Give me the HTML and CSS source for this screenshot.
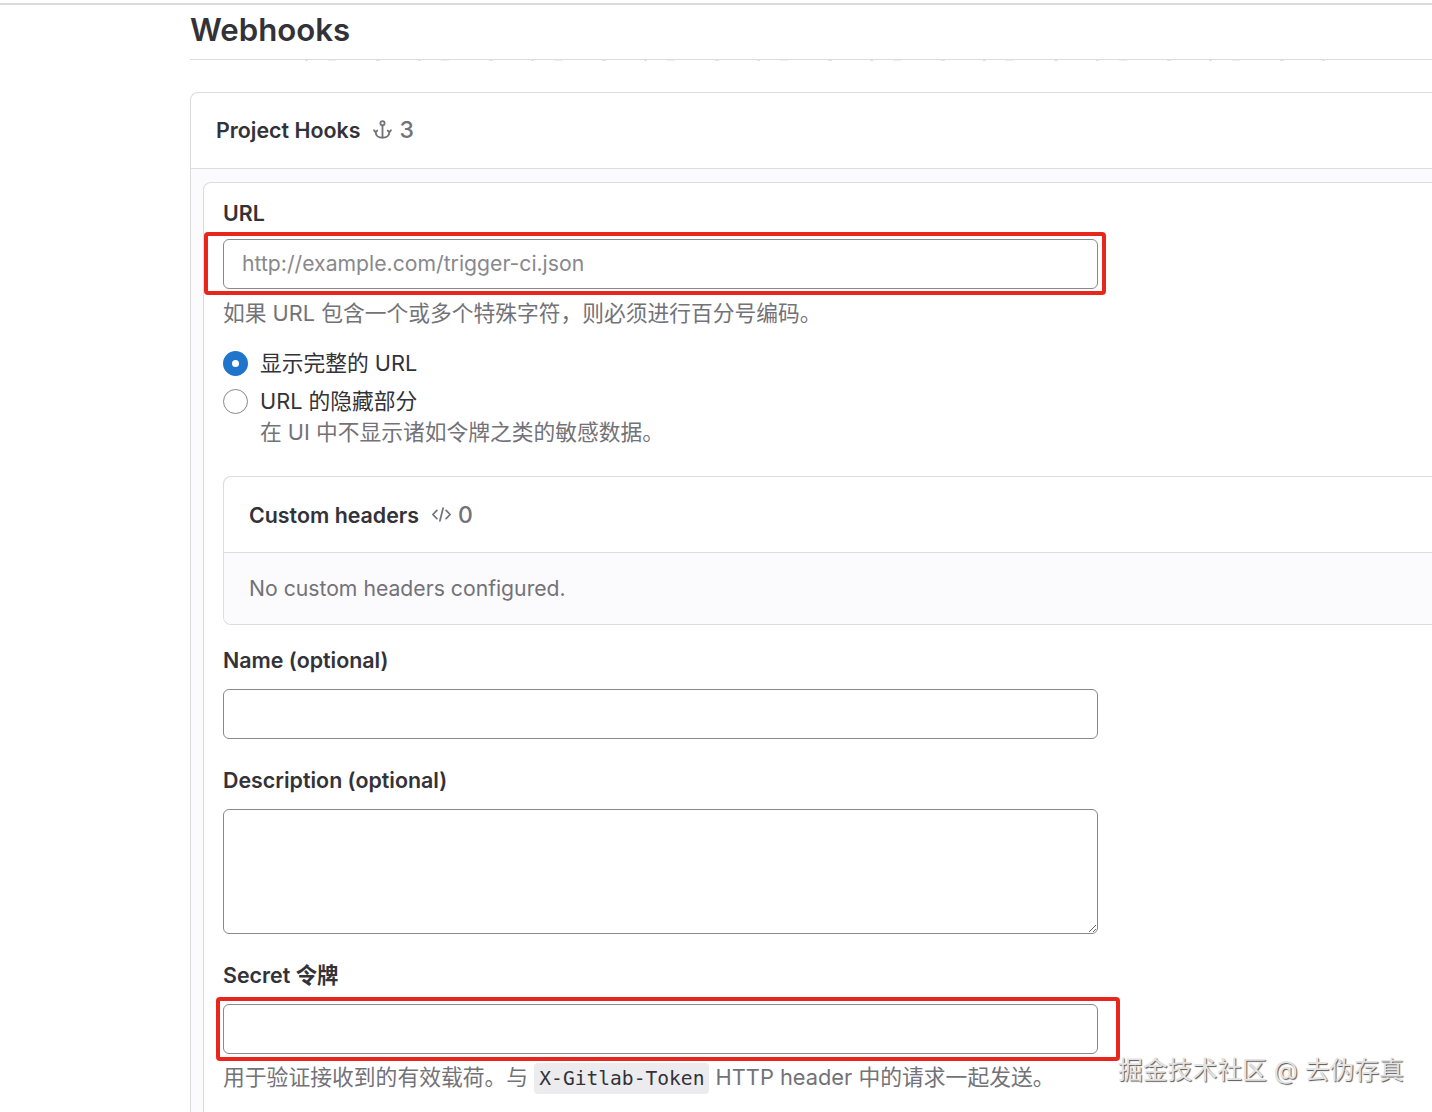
FILE: index.html
```html
<!DOCTYPE html>
<html lang="zh-CN">
<head>
    <meta charset="UTF-8">
    <meta name="viewport" content="width=device-width, initial-scale=1.0">
    <title>Webhooks</title>
    <link rel="stylesheet" href="styles.css">
</head>
<body>
    <div class="top-line"></div>
    <main class="content">
        <h1 class="page-title">Webhooks</h1>
        <div class="clipped-text"></div>

        <section class="card">
            <header class="card-header project-header">
                <strong>Project Hooks</strong>
                <span class="count">
                    <svg class="icon" viewBox="0 0 16 16" width="21" height="21" fill="none" stroke="currentColor" stroke-width="1.4" stroke-linecap="round" stroke-linejoin="round">
                        <circle cx="8" cy="3.2" r="1.6"/>
                        <path d="M8 4.8V14.2"/>
                        <path d="M1.6 8.6l1.2 1.4 1.2-1.2"/>
                        <path d="M14.4 8.6l-1.2 1.4-1.2-1.2"/>
                        <path d="M2.8 10c0 2.6 2.2 4.2 5.2 4.2s5.2-1.6 5.2-4.2"/>
                    </svg>
                    3
                </span>
            </header>
            <div class="card-body">
                <form class="hook-form">
                    <div class="field field-url">
                        <label class="field-label" for="hook-url">URL</label>
                        <div class="marked">
                            <input class="text-input" type="text" id="hook-url" placeholder="http://example.com/trigger-ci.json">
                            <div class="red-box red-box-url"></div>
                        </div>
                        <p class="help">如果 URL 包含一个或多个特殊字符，则必须进行百分号编码。</p>
                    </div>

                    <div class="radio-group">
                        <div class="radio-row">
                            <span class="radio radio-on"></span>
                            <span class="radio-text">显示完整的 URL</span>
                        </div>
                        <div class="radio-row">
                            <span class="radio"></span>
                            <span class="radio-text">URL 的隐藏部分</span>
                        </div>
                        <p class="help radio-help">在 UI 中不显示诸如令牌之类的敏感数据。</p>
                    </div>

                    <section class="card sub-card">
                        <header class="card-header">
                            <strong>Custom headers</strong>
                            <span class="count">
                                <svg class="icon" viewBox="0 0 16 16" width="21" height="21" fill="none" stroke="currentColor" stroke-width="1.3" stroke-linecap="round" stroke-linejoin="round">
                                    <path d="M4.5 4.8L1.4 8l3.1 3.2"/>
                                    <path d="M11.5 4.8L14.6 8l-3.1 3.2"/>
                                    <path d="M9.2 3.2L6.8 12.8"/>
                                </svg>
                                0
                            </span>
                        </header>
                        <div class="sub-card-body">No custom headers configured.</div>
                    </section>

                    <div class="field">
                        <label class="field-label" for="hook-name">Name (optional)</label>
                        <input class="text-input" type="text" id="hook-name">
                    </div>

                    <div class="field">
                        <label class="field-label" for="hook-desc">Description (optional)</label>
                        <textarea class="text-input text-area" id="hook-desc"></textarea>
                    </div>

                    <div class="field">
                        <label class="field-label" for="hook-secret">Secret 令牌</label>
                        <div class="marked">
                            <input class="text-input" type="text" id="hook-secret">
                            <div class="red-box red-box-secret"></div>
                        </div>
                        <p class="help help-token">用于验证接收到的有效载荷。与 <code class="code-tag">X-Gitlab-Token</code> HTTP header 中的请求一起发送。</p>
                    </div>
                </form>
            </div>
        </section>
    </main>
    <div class="watermark">掘金技术社区 @ 去伪存真</div>
</body>
</html>
```

FILE: styles.css
```css
html, body {
    height: 1112px;
}
body {
    margin: 0;
    overflow: hidden;
    position: relative;
    background-color: #fff;
    font-family: Inter, "Noto Sans CJK SC", sans-serif;
    font-size: 21.4px;
    color: #333238;
}
.top-line {
    height: 2px;
    margin-top: 3px;
    background-color: #dcdcde;
}
.content {
    margin-left: 190px;
    width: 1242px;
}
.page-title {
    margin: 0;
    height: 55px;
    box-sizing: border-box;
    padding-top: 4px;
    font-size: 31.2px;
    line-height: 42px;
    font-weight: 600;
    border-bottom: 1px solid #dcdcde;
}
/* remains of the description scrolled under the sticky title */
.clipped-text {
    height: 1px;
    width: 1025px;
    margin: 0 0 31px 115px;
    background-image: repeating-linear-gradient(90deg, #e2e2e2 0 3px, transparent 3px 23px, #efefef 23px 31px, transparent 31px 71px, #e6e6e6 71px 75px, transparent 75px 113px);
}
.card {
    border: 1px solid #dcdcde;
    border-right: 0;
    border-bottom: 0;
    border-radius: 8px 0 0 0;
    background-color: #fff;
}
.card-header {
    display: flex;
    align-items: center;
    height: 75px;
    padding-left: 25px;
    border-bottom: 1px solid #dcdcde;
}
.project-header {
    height: 73px;
    padding-bottom: 2px;
}
.card-header strong {
    font-weight: 600;
}
.count {
    display: flex;
    align-items: center;
    gap: 6px;
    margin-left: 12px;
    font-size: 23px;
    font-weight: 500;
    color: #737278;
}
.icon {
    display: block;
}
.card-body {
    height: 943px;
    box-sizing: border-box;
    padding: 13px 0 0 12px;
    background-color: #fbfafd;
}
.hook-form {
    height: 930px;
    box-sizing: border-box;
    padding: 15px 0 0 19px;
    background-color: #fff;
    border: 1px solid #dcdcde;
    border-right: 0;
    border-bottom: 0;
    border-radius: 8px 0 0 0;
}
.field {
    width: 875px;
    margin-bottom: 26px;
}
.field-label {
    display: block;
    height: 31px;
    margin-bottom: 13px;
    font-weight: 600;
    line-height: 31px;
}
.field-url .field-label {
    margin-bottom: 10px;
}
.marked {
    position: relative;
}
.text-input {
    display: block;
    width: 100%;
    height: 50px;
    box-sizing: border-box;
    padding: 0 18px 2px;
    border: 1px solid #89888d;
    border-radius: 6px;
    background-color: #fff;
    font-family: inherit;
    font-size: 21.2px;
    color: #333238;
}
.text-input::placeholder {
    color: #89888d;
    opacity: 1;
}
.text-area {
    height: 125px;
    resize: vertical;
}
.help {
    margin: 9px 0 0;
    font-size: 21.75px;
    line-height: 31px;
    color: #737278;
    white-space: nowrap;
}
.help-token {
    margin-top: 8px;
    font-size: 21.8px;
}
.red-box {
    position: absolute;
    border: 4px solid #e8261c;
    border-radius: 4px;
    pointer-events: none;
}
.red-box-url {
    left: -19px;
    top: -7px;
    width: 894px;
    height: 55px;
}
.red-box-secret {
    left: -7px;
    top: -7px;
    width: 896px;
    height: 56px;
}
.radio-group {
    margin-top: -11px;
    margin-bottom: 28px;
}
.radio-row {
    display: flex;
    align-items: center;
    gap: 12px;
    height: 38px;
}
.radio {
    width: 25px;
    height: 25px;
    box-sizing: border-box;
    border: 1px solid #89888d;
    border-radius: 50%;
    background-color: #fff;
}
.radio-on {
    border: 9px solid #1f75cb;
}
.radio-text {
    font-size: 21.75px;
    line-height: 31px;
}
.radio-help {
    margin: -3px 0 0 37px;
}
.sub-card {
    margin-bottom: 20px;
    border-bottom: 1px solid #dcdcde;
    border-radius: 8px 0 0 8px;
}
.sub-card-body {
    height: 71px;
    padding-left: 25px;
    font-size: 21.2px;
    line-height: 71px;
    background-color: #fbfafd;
    border-radius: 0 0 0 8px;
    color: #737278;
}
.code-tag {
    display: inline-block;
    padding: 0 5px;
    border-radius: 4px;
    background-color: #ececef;
    font-family: "DejaVu Sans Mono", monospace;
    font-size: 19.6px;
    color: #333238;
}
.watermark {
    position: absolute;
    left: 1118px;
    top: 1053px;
    font-size: 24.8px;
    line-height: 34px;
    color: #e4e4e4;
    text-shadow: 1px 1px 1px #555;
    white-space: nowrap;
}
```
